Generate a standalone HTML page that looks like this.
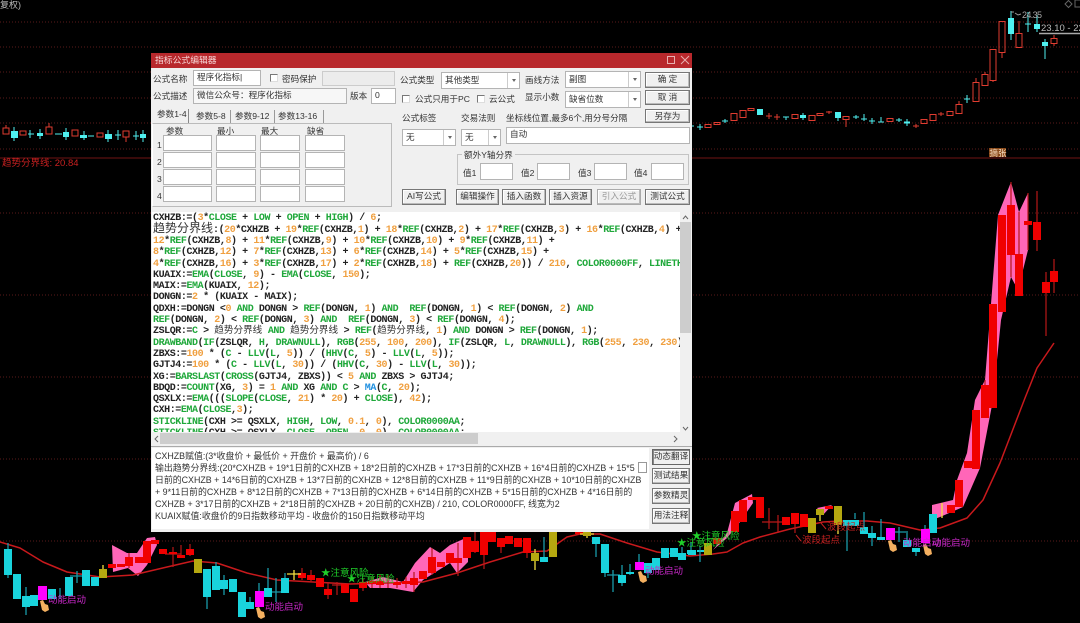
<!DOCTYPE html>
<html><head><meta charset="utf-8"><style>
html,body{margin:0;padding:0;background:#000;width:1080px;height:623px;overflow:hidden}
body{position:relative;font-family:"Liberation Sans","Noto Sans CJK SC",sans-serif}
svg.c{position:absolute;left:0;top:0;filter:blur(.35px)}
svg text{font-family:"Liberation Sans","Noto Sans CJK SC",sans-serif}
#d{position:absolute;left:151px;top:53px;width:541px;height:479px;background:#f0f0f0;overflow:hidden;filter:blur(.3px)}
#tb{position:absolute;left:0;top:0;width:541px;height:15px;background:#b8282c}
#d>div,#d>span{position:absolute}
.t{font-size:8.6px;line-height:12px;color:#333;white-space:nowrap}
.i{background:#fff;border:1px solid #b4b4b4;box-sizing:border-box;font-size:8.6px;line-height:13px;color:#333;padding-left:3px;white-space:nowrap}
.s{background:#fff;border:1px solid #b4b4b4;box-sizing:border-box;font-size:8.6px;line-height:14px;color:#333;padding-left:3px;white-space:nowrap}
.s:after{content:"";position:absolute;right:11px;top:0;bottom:0;width:1px;background:#ccc}
.s:before{content:"";position:absolute;right:3px;top:6px;border:2.5px solid transparent;border-top:3px solid #666;border-bottom:0}
.c2{width:8px;height:8px;border:1px solid #777;border-right-color:#ddd;border-bottom-color:#ddd;background:#fff;box-sizing:border-box}
.b{background:#f0f0f0;border:1px solid #777;box-sizing:border-box;font-size:8.6px;text-align:center;color:#333;line-height:13px;box-shadow:inset -1px -1px 0 #bbb,inset 1px 1px 0 #fff;white-space:nowrap}
#e{left:1px;top:159px;width:528px;height:220px;padding-top:1.4px;box-sizing:border-box;background:#fff;overflow:hidden;font-family:"Liberation Mono","Noto Sans CJK SC",monospace;font-size:10px;font-weight:bold;letter-spacing:-.43px;color:#222}
#e div{height:11.3px;line-height:11.3px;white-space:pre;padding-left:1px}
#e b{color:#1fa83a}#e i{font-style:normal;color:#f0a040}
#e u{text-decoration:none;font-family:"Noto Sans CJK SC",sans-serif;font-weight:normal;font-size:9.6px;letter-spacing:0;color:#333;line-height:1px}
#e s{text-decoration:none;font-family:"Noto Sans CJK SC",sans-serif;font-weight:normal;font-size:12px;letter-spacing:0;color:#333;line-height:1px}
#l{left:1px;top:395px;width:497px;height:81px;background:#fff;font-size:8.9px;line-height:12px;color:#333;padding:2.4px 0 0 3px;box-sizing:border-box;white-space:nowrap;overflow:hidden}
</style></head><body>
<svg class="c" width="1080" height="623" viewBox="0 0 1080 623">
<g stroke="#5a1a1a" stroke-width="1" stroke-dasharray="1 2" fill="none">
<path d="M0 22H1080M0 47H1080M0 72H1080M0 98H1080M0 123H1080M0 149H1080M0 213H1080M0 295H1080M0 377H1080M0 459H1080M0 541H1080"/>
</g>
<path d="M0 158H1080" stroke="#701515"/>
<text x="0" y="8" font-size="9" fill="#bbb">复权)</text>
<text x="2" y="166" font-size="9.5" fill="#c82020">趋势分界线: 20.84</text>
<!-- top-left candles -->
<g fill="none" stroke="#e03c30">
<path d="M3 128h6v6h-6zM20 131h6v4h-6zM46 127h6v7h-6zM72 130h6v6h-6zM97 133h6v4h-6zM123 131h6v6h-6zM6 125v3M49 123v4M126 137v5"/>
</g>
<path d="M11 131h7v7h-7zM37 133h6v3h-6zM63 132h6v5h-6zM80 135h7v3h-7zM105 134h7v5h-7zM140 134h6v4h-6z" fill="#4ff0f0"/>
<path d="M14 127v14M30 130v8M40 129v10M66 128v12M84 131v9M108 130v12M143 130v12M28 134h6M55 134h7M88 136h6M115 135h6M118 130v10M133 136h6M136 131v9" stroke="#4ff0f0" fill="none"/>
<!-- top panel right -->
<g fill="none" stroke="#e03c30" stroke-width="1">
<path d="M705 124.500h6v3h-6zM714 122.500h6v2h-6zM731 113.500h6v7h-6zM740 110.500h6v7h-6zM748 108.500h6v2h-6zM792 114.500h6v4h-6zM809 115.500h6v5h-6zM817 113.500h6v2h-6zM843 116.500h6v3h-6zM887 118.500h6v3h-6zM921 119.500h6v4h-6zM930 114.500h6v6h-6zM947 111.500h6v4h-6zM956 104.500h6v9h-6zM973 82.500h6v19h-6zM982 74.500h6v11h-6zM990 49.500h6v31h-6zM999 21.500h6v31h-6zM1016 33.500h6v14h-6zM1051 38.500h6v5h-6z"/>
<path d="M766 116h6M769 113v6M774 117h6M777 114v6M826 112h6M829 111v3M846 119v8M913 126h6M916 124v4M938 114h6M941 112v4M976 78v4M985 72v2M993 80v2M1002 52v6M1019 21v12M1054 35v3M1054 43v3M959 101v3"/>
</g>
<path d="M757 109h6v6h-6zM800 115h6v3h-6zM835 112h6v6h-6zM1008 18h6v16h-6zM1034 24h6v5h-6zM1042 42h6v4h-6zM904 121.500h6v2h-6z" fill="#4ff0f0"/>
<path d="M697 127h6M700 124v6M722 121h6M725 119v4M783 117h6M786 117v3M803 113v7M838 118v3M853 117h6M856 115v4M861 119h6M864 114v7M869 121h6M872 118v6M878 122h6M881 117v5M896 120h6M899 118v4M907 119v7M964 99h6M967 95v8M1011 11v29M1025 24h6M1028 12v20M1037 15v17M1045 39v20M691 126h3" stroke="#4ff0f0" fill="none"/>
<path d="M1011 12h3M1015 13l3 2 3-1" fill="none" stroke="#999"/>
<text x="1022" y="18" font-size="9" fill="#aaa" textLength="20">24.35</text>
<text x="1041" y="31" font-size="9.500" fill="#bbb">23.10 - 22</text>
<path d="M1039 33.500H1080" stroke="#aaa" stroke-width="1.500"/>
<path d="M1065 4l3.500-3.500 3.500 3.500-3.500 3.500z" fill="none" stroke="#666"/>
<rect x="1075" y="0" width="6" height="7" fill="none" stroke="#666"/>
<rect x="989" y="148" width="17" height="9" fill="#8a4a1a"/>
<text x="989.500" y="156" font-size="8.500" fill="#f5dcc0">摘张</text>
<!-- pink zones -->
<g fill="#ff66b8">
<path d="M932 505 953 500 957 480 967 453 975 400 985 380 998 215 1011 182 1019 212 1028 193 1028 250 1018 290 1011 277 1001 320 993 400 980 468 963 507 940 517 932 520Z"/>
<path d="M112 545 127 553 137 553 147 538 155 537 157 545 147 565 138 576 128 568 113 572Z"/>
<path d="M365 582 383 577 403 582 415 563 430 547 440 553 450 545 468 537 468 562 457 573 450 563 423 580 413 592 390 588 370 588Z"/>
<path d="M713 550 727 533 735 503 752 494 753 503 740 522 727 538Z"/>
<path d="M817 508 832 505 823 515Z"/>
</g>
<!-- trend line -->
<path d="M0 542 20 548 43 562 67 572 100 577 133 575 167 567 193 561 217 563 247 573 277 580 313 582 350 584 423 582 457 573 490 562 523 552 547 551 567 537 580 534 600 534 627 543 657 552 690 556 713 554 727 552 743 543 760 537 790 529 823 522 840 521 867 521 890 523 920 530 940 528 967 518 983 500 1000 463 1010 437 1025 398 1037 368 1054 343" fill="none" stroke="#c8191c" stroke-width="1.500" stroke-linejoin="round"/>
<!-- red wicks -->
<path d="M129 553v15M173 547v20M165 554h16M181 545v13M190 544v12M302 568v12M328 583v16M337 582v13M332 585h10M311 570v12M414 572v20M432 548v27M458 543v33M475 531v22M484 555v14M501 547v6M527 553v5M372 577v11M380 575v13M388 575v13M397 578v10M406 577v11M363 579v12M769 508v21M762 522h15M778 515v17M771 522h14M795 524v9M1011 182v95M1019 212v84M1028 193v57M1037 191v60M1046 272v64M1054 259v34M985 380v6" stroke="#b81818" stroke-width="1.200" fill="none"/>
<!-- red bodies -->
<path fill="#f00000" d="M108 564h8v4h-8zM117 564h8v3h-8zM125 557h8v9h-8zM135 557h8v6h-8zM143 541h8v22h-8zM151 540h8v4h-8zM159 549h8v5h-8zM169 552h8v2h-8zM177 555h8v3h-8zM186 549h8v6h-8zM298 573h8v5h-8zM307 575h8v5h-8zM316 578h8v9h-8zM324 589h8v6h-8zM341 584h8v9h-8zM350 589h8v13h-8zM359 582h8v6h-8zM368 581h8v3h-8zM376 581h8v4h-8zM393 582h8v3h-8zM402 581h8v3h-8zM410 578h8v7h-8zM419 571h8v8h-8zM428 557h8v16h-8zM437 562h8v5h-8zM446 553h8v10h-8zM454 558h8v5h-8zM463 537h8v21h-8zM471 541h8v11h-8zM480 531h8v24h-8zM488 531h8v11h-8zM497 538h8v9h-8zM505 536h8v8h-8zM514 538h8v9h-8zM523 538h8v15h-8zM575 531h8v3h-8zM713 538h8v6h-8zM731 511h8v21h-8zM739 500h8v22h-8zM748 497h8v3h-8zM756 497h8v21h-8zM782 517h8v8h-8zM791 513h8v11h-8zM800 514h8v13h-8zM825 506h8v3h-8zM947 505h8v8h-8zM955 480h8v27h-8zM964 461h8v7h-8zM972 410h8v59h-8zM981 385h8v33h-8zM989 304h8v96h-8zM989 400h8v8h-8zM998 215h8v97h-8zM1007 205h8v50h-8zM1015 254h8v42h-8zM1024 221h8v4h-8zM1033 222h8v18h-8zM1042 282h8v11h-8zM1050 271h8v11h-8z"/>
<!-- cyan wicks -->
<path d="M8 543v35M26 587v28M60 588v11M69 577v19M77 571v12M70 576h14M268 568v20M276 578v24M270 592h13M285 573v6M224 575v20M216 562v5M250 597v12M207 597v12M259 583v8M544 537v20M596 544v13M605 573v4M613 570v22M607 575h13M622 565v21M630 564v11M639 554v8M648 573v5M682 547v13M691 542v10M700 551v11M855 513v6M864 512v22M872 526v20M881 519v19M899 527v15M892 532h14M907 531v9M916 552v4M847 525v26M925 525v4M674 548v4" stroke="#1a9aa8" stroke-width="1.300" fill="none"/>
<!-- cyan bodies -->
<path fill="#19d3dc" d="M4 549h8v26h-8zM13 574h8v25h-8zM22 596h8v11h-8zM30 595h8v11h-8zM48 589h8v10h-8zM65 577h8v19h-8zM82 570h8v16h-8zM91 577h8v9h-8zM203 569h8v28h-8zM212 566h8v24h-8zM220 580h8v9h-8zM229 579h8v13h-8zM238 592h8v25h-8zM246 602h8v7h-8zM264 588h8v9h-8zM281 578h8v15h-8zM540 557h8v5h-8zM592 537h8v7h-8zM601 544h8v29h-8zM618 575h8v8h-8zM626 572h8v2h-8zM644 563h8v10h-8zM652 558h8v12h-8zM661 548h8v10h-8zM670 548h8v9h-8zM678 553h8v7h-8zM687 550h8v4h-8zM688 550h8v5h-8zM843 520h8v6h-8zM851 520h8v6h-8zM860 527h8v7h-8zM868 533h8v5h-8zM877 537h8v3h-8zM903 540h8v7h-8zM912 548h8v4h-8zM929 514h8v19h-8z"/>
<path d="M697 550h7v2h-7z" fill="#19d3dc"/>
<path d="M700 546v16" stroke="#1a9aa8"/>
<!-- olive/yellow -->
<path d="M103 565v5M535 549v21M820 515v6M838 525v9M942 503v15M294 570v10M287 574h14M587 530v8M580 534h14" stroke="#f4e040" stroke-width="1.300" fill="none"/>
<path fill="#b5a810" d="M99 569h8v9h-8zM194 559h8v14h-8zM531 553h8v8h-8zM549 531h8v26h-8zM704 543h8v12h-8zM808 518h8v15h-8zM816 509h8v6h-8zM834 506h8v19h-8zM583 532h8v4h-8z"/>
<!-- magenta -->
<path fill="#ff00ff" d="M38 586h9v14h-9zM255 591h9v16h-9zM635 562h9v8h-9zM886 528h9v12h-9zM921 529h9v14h-9z"/>
<!-- hands -->
<g fill="#f4b060">
<path d="M40 601l3-1 2 4 3 1 1 5-4 2-3-2z"/>
<path d="M256 608l3-1 2 4 3 1 1 5-4 2-3-2z"/>
<path d="M638 572l3-1 2 4 3 1 1 5-4 2-3-2z"/>
<path d="M888 541l3-1 2 4 3 1 1 5-4 2-3-2z"/>
<path d="M923 545l3-1 2 4 3 1 1 5-4 2-3-2z"/>
</g>
<!-- labels -->
<g font-size="9.500" fill="#c828c8">
<text x="48" y="603">动能启动</text><text x="265" y="610">动能启动</text><text x="645" y="574">动能启动</text><text x="903" y="546">动能启动</text><text x="932" y="546">动能启动</text>
</g>
<g font-size="9.500" fill="#1fd02a">
<text x="321" y="576">★注意风险</text><text x="347" y="582">★注意风险</text><text x="677" y="546">★注意风险</text><text x="692" y="539">★注意风险</text>
</g>
<g font-size="9.500" fill="#c02020">
<text x="802" y="543">波段起点</text><text x="827" y="530">波段起点</text>
</g>
<path d="M796 535l5 6M821 523l5 6" stroke="#c02020" fill="none"/>
</svg>
<div id="d">
<div id="tb"></div>
<span class="t" style="left:4px;top:1px;color:#f7d8d8;font-size:8.800px">指标公式编辑器</span>
<svg style="position:absolute;left:515px;top:2px" width="26" height="11"><rect x="1.500" y="1.500" width="7" height="7" fill="none" stroke="#e8b0b0"/><path d="M15 1l8 8M23 1l-8 8" stroke="#e8b0b0"/></svg>
<span class="t" style="left:2px;top:20px">公式名称</span>
<div class="i" style="left:42px;top:17px;width:68px;height:16px">程序化指标|</div>
<div class="c2" style="left:119px;top:21px"></div>
<span class="t" style="left:131px;top:20px">密码保护</span>
<div style="left:171px;top:18px;width:73px;height:15px;background:#ececec;border:1px solid #ccc;box-sizing:border-box"></div>
<span class="t" style="left:2px;top:37px">公式描述</span>
<div class="i" style="left:42px;top:35px;width:154px;height:16px;background:#f7f7f7">微信公众号：程序化指标</div>
<span class="t" style="left:199px;top:37px">版本</span>
<div class="i" style="left:220px;top:35px;width:25px;height:16px">0</div>
<!-- tabs -->
<span class="t" style="left:6px;top:55px">参数1-4</span>
<span class="t" style="left:45px;top:57px">参数5-8</span>
<span class="t" style="left:84px;top:57px">参数9-12</span>
<span class="t" style="left:127px;top:57px">参数13-16</span>
<div style="left:37px;top:56px;width:1px;height:14px;background:#888"></div>
<div style="left:79px;top:57px;width:1px;height:13px;background:#999"></div>
<div style="left:123px;top:57px;width:1px;height:13px;background:#999"></div>
<div style="left:172px;top:57px;width:1px;height:13px;background:#999"></div>
<div style="left:1px;top:70px;width:240px;height:84px;border:1px solid #bbb;border-left-color:#fff;box-sizing:border-box"></div>
<span class="t" style="left:15px;top:72px">参数</span>
<span class="t" style="left:66px;top:72px">最小</span>
<span class="t" style="left:110px;top:72px">最大</span>
<span class="t" style="left:156px;top:72px">缺省</span>
<span class="t" style="left:6px;top:86px">1</span><span class="t" style="left:6px;top:103px">2</span><span class="t" style="left:6px;top:120px">3</span><span class="t" style="left:6px;top:137px">4</span>
<div class="i" style="left:12px;top:82px;width:49px;height:16px"></div><div class="i" style="left:65px;top:82px;width:40px;height:16px"></div><div class="i" style="left:109px;top:82px;width:40px;height:16px"></div><div class="i" style="left:154px;top:82px;width:40px;height:16px"></div>
<div class="i" style="left:12px;top:99px;width:49px;height:16px"></div><div class="i" style="left:65px;top:99px;width:40px;height:16px"></div><div class="i" style="left:109px;top:99px;width:40px;height:16px"></div><div class="i" style="left:154px;top:99px;width:40px;height:16px"></div>
<div class="i" style="left:12px;top:116px;width:49px;height:16px"></div><div class="i" style="left:65px;top:116px;width:40px;height:16px"></div><div class="i" style="left:109px;top:116px;width:40px;height:16px"></div><div class="i" style="left:154px;top:116px;width:40px;height:16px"></div>
<div class="i" style="left:12px;top:133px;width:49px;height:16px"></div><div class="i" style="left:65px;top:133px;width:40px;height:16px"></div><div class="i" style="left:109px;top:133px;width:40px;height:16px"></div><div class="i" style="left:154px;top:133px;width:40px;height:16px"></div>
<!-- right form -->
<span class="t" style="left:249px;top:21px">公式类型</span>
<div class="s" style="left:290px;top:19px;width:79px;height:17px">其他类型</div>
<span class="t" style="left:374px;top:21px">画线方法</span>
<div class="s" style="left:414px;top:18px;width:76px;height:17px">副图</div>
<div class="b" style="left:494px;top:19px;width:45px;height:16px">确 定</div>
<div class="c2" style="left:251px;top:42px"></div>
<span class="t" style="left:264px;top:40px">公式只用于PC</span>
<div class="c2" style="left:326px;top:42px"></div>
<span class="t" style="left:338px;top:40px">云公式</span>
<span class="t" style="left:374px;top:38px">显示小数</span>
<div class="s" style="left:414px;top:38px;width:76px;height:17px">缺省位数</div>
<div class="b" style="left:494px;top:37px;width:45px;height:15px">取 消</div>
<div class="b" style="left:494px;top:56px;width:45px;height:14px;line-height:12px">另存为</div>
<span class="t" style="left:251px;top:59px">公式标签</span>
<span class="t" style="left:310px;top:59px">交易法则</span>
<span class="t" style="left:355px;top:59px">坐标线位置,最多6个,用分号分隔</span>
<div class="s" style="left:251px;top:76px;width:54px;height:17px">无</div>
<div class="s" style="left:310px;top:76px;width:40px;height:17px">无</div>
<div class="i" style="left:355px;top:74px;width:184px;height:17px">自动</div>
<div style="left:306px;top:101px;width:232px;height:31px;border:1px solid #c4c4c4;box-sizing:border-box"></div>
<span class="t" style="left:311px;top:96px;background:#f0f0f0;padding:0 2px">额外Y轴分界</span>
<span class="t" style="left:312px;top:114px">值1</span><div class="i" style="left:329px;top:110px;width:33px;height:17px"></div>
<span class="t" style="left:370px;top:114px">值2</span><div class="i" style="left:386px;top:110px;width:33px;height:17px"></div>
<span class="t" style="left:427px;top:114px">值3</span><div class="i" style="left:443px;top:110px;width:33px;height:17px"></div>
<span class="t" style="left:483px;top:114px">值4</span><div class="i" style="left:500px;top:110px;width:33px;height:17px"></div>
<div class="b" style="left:251px;top:136px;width:44px;height:16px">AI写公式</div>
<div class="b" style="left:305px;top:136px;width:43px;height:16px">编辑操作</div>
<div class="b" style="left:351px;top:136px;width:44px;height:16px">插入函数</div>
<div class="b" style="left:398px;top:136px;width:43px;height:16px">插入资源</div>
<div class="b" style="left:446px;top:136px;width:44px;height:16px;color:#999;border-color:#aaa">引入公式</div>
<div class="b" style="left:494px;top:136px;width:45px;height:16px">测试公式</div>
<!-- editor -->
<div id="e">
<div>CXHZB:=(<i>3</i>*<b>CLOSE</b> + <b>LOW</b> + <b>OPEN</b> + <b>HIGH</b>) / <i>6</i>;</div>
<div><s>趋势分界线</s>:(<i>20</i>*CXHZB + <i>19</i>*<b>REF</b>(CXHZB,<i>1</i>) + <i>18</i>*<b>REF</b>(CXHZB,<i>2</i>) + <i>17</i>*<b>REF</b>(CXHZB,<i>3</i>) + <i>16</i>*<b>REF</b>(CXHZB,<i>4</i>) +</div>
<div><i>12</i>*<b>REF</b>(CXHZB,<i>8</i>) + <i>11</i>*<b>REF</b>(CXHZB,<i>9</i>) + <i>10</i>*<b>REF</b>(CXHZB,<i>10</i>) + <i>9</i>*<b>REF</b>(CXHZB,<i>11</i>) +</div>
<div><i>8</i>*<b>REF</b>(CXHZB,<i>12</i>) + <i>7</i>*<b>REF</b>(CXHZB,<i>13</i>) + <i>6</i>*<b>REF</b>(CXHZB,<i>14</i>) + <i>5</i>*<b>REF</b>(CXHZB,<i>15</i>) +</div>
<div><i>4</i>*<b>REF</b>(CXHZB,<i>16</i>) + <i>3</i>*<b>REF</b>(CXHZB,<i>17</i>) + <i>2</i>*<b>REF</b>(CXHZB,<i>18</i>) + <b>REF</b>(CXHZB,<i>20</i>)) / <i>210</i>, <b>COLOR0000FF</b>, <b>LINETHICK2</b>;</div>
<div>KUAIX:=<b>EMA</b>(<b>CLOSE</b>, <i>9</i>) - <b>EMA</b>(<b>CLOSE</b>, <i>150</i>);</div>
<div>MAIX:=<b>EMA</b>(KUAIX, <i>12</i>);</div>
<div>DONGN:=<i>2</i> * (KUAIX - MAIX);</div>
<div>QDXH:=DONGN &lt;<i>0</i> <b>AND</b> DONGN &gt; <b>REF</b>(DONGN, <i>1</i>) <b>AND</b>  <b>REF</b>(DONGN, <i>1</i>) &lt; <b>REF</b>(DONGN, <i>2</i>) <b>AND</b></div>
<div><b>REF</b>(DONGN, <i>2</i>) &lt; <b>REF</b>(DONGN, <i>3</i>) <b>AND</b>  <b>REF</b>(DONGN, <i>3</i>) &lt; <b>REF</b>(DONGN, <i>4</i>);</div>
<div>ZSLQR:=<b>C</b> &gt; <u>趋势分界线</u> <b>AND</b> <u>趋势分界线</u> &gt; <b>REF</b>(<u>趋势分界线</u>, <i>1</i>) <b>AND</b> DONGN &gt; <b>REF</b>(DONGN, <i>1</i>);</div>
<div><b>DRAWBAND</b>(<b>IF</b>(ZSLQR, <b>H</b>, <b>DRAWNULL</b>), <b>RGB</b>(<i>255</i>, <i>100</i>, <i>200</i>), <b>IF</b>(ZSLQR, <b>L</b>, <b>DRAWNULL</b>), <b>RGB</b>(<i>255</i>, <i>230</i>, <i>230</i>));</div>
<div>ZBXS:=<i>100</i> * (<b>C</b> - <b>LLV</b>(<b>L</b>, <i>5</i>)) / (<b>HHV</b>(<b>C</b>, <i>5</i>) - <b>LLV</b>(<b>L</b>, <i>5</i>));</div>
<div>GJTJ4:=<i>100</i> * (<b>C</b> - <b>LLV</b>(<b>L</b>, <i>30</i>)) / (<b>HHV</b>(<b>C</b>, <i>30</i>) - <b>LLV</b>(<b>L</b>, <i>30</i>));</div>
<div>XG:=<b>BARSLAST</b>(<b>CROSS</b>(GJTJ4, ZBXS)) &lt; <i>5</i> <b>AND</b> ZBXS &gt; GJTJ4;</div>
<div>BDQD:=<b>COUNT</b>(XG, <i>3</i>) = <i>1</i> <b>AND</b> XG <b>AND</b> <b>C</b> &gt; <span style="color:#2090e0">MA</span>(<b>C</b>, <i>20</i>);</div>
<div>QSXLX:=<b>EMA</b>(((<b>SLOPE</b>(<b>CLOSE</b>, <i>21</i>) * <i>20</i>) + <b>CLOSE</b>), <i>42</i>);</div>
<div>CXH:=<b>EMA</b>(<b>CLOSE</b>,<i>3</i>);</div>
<div><b>STICKLINE</b>(CXH &gt;= QSXLX, <b>HIGH</b>, <b>LOW</b>, <i>0.1</i>, <i>0</i>), <b>COLOR0000AA</b>;</div>
<div><b>STICKLINE</b>(CXH &gt;= QSXLX, <b>CLOSE</b>, <b>OPEN</b>, <i>0</i>, <i>0</i>), <b>COLOR0000AA</b>;</div>
</div>
<!-- scrollbars -->
<div style="left:529px;top:159px;width:11px;height:220px;background:#f0f0f0"></div>
<div style="left:529px;top:169px;width:11px;height:111px;background:#cdcdcd"></div>
<svg style="position:absolute;left:529px;top:160px" width="11" height="220"><path d="M3 6l2.500-3 2.500 3M3 214l2.500 3 2.500-3" fill="none" stroke="#666"/></svg>
<div style="left:1px;top:379px;width:528px;height:14px;background:#f0f0f0"></div>
<div style="left:9px;top:380px;width:318px;height:11px;background:#cdcdcd"></div>
<svg style="position:absolute;left:1px;top:379px" width="528" height="14"><path d="M6 4l-3 3 3 3M522 4l3 3-3 3" fill="none" stroke="#666"/></svg>
<div style="left:0;top:393px;width:541px;height:1px;background:#aaa"></div>
<!-- lower -->
<div id="l">CXHZB赋值:(3*收盘价 + 最低价 + 开盘价 + 最高价) / 6<br>输出趋势分界线:(20*CXHZB + 19*1日前的CXHZB + 18*2日前的CXHZB + 17*3日前的CXHZB + 16*4日前的CXHZB + 15*5<br>日前的CXHZB + 14*6日前的CXHZB + 13*7日前的CXHZB + 12*8日前的CXHZB + 11*9日前的CXHZB + 10*10日前的CXHZB<br>+ 9*11日前的CXHZB + 8*12日前的CXHZB + 7*13日前的CXHZB + 6*14日前的CXHZB + 5*15日前的CXHZB + 4*16日前的<br>CXHZB + 3*17日前的CXHZB + 2*18日前的CXHZB + 20日前的CXHZB) / 210, COLOR0000FF, 线宽为2<br>KUAIX赋值:收盘价的9日指数移动平均 - 收盘价的150日指数移动平均</div>
<div style="left:487px;top:409px;width:7px;height:9px;border:1px solid #999;background:#fff"></div>
<div class="b" style="left:501px;top:396px;width:38px;height:16px;box-shadow:inset 1px 1px 0 #888;border-color:#666">动态翻译</div>
<div class="b" style="left:501px;top:415px;width:38px;height:16px">测试结果</div>
<div class="b" style="left:501px;top:435px;width:38px;height:16px">参数精灵</div>
<div class="b" style="left:501px;top:455px;width:38px;height:16px">用法注释</div>
</div>
</body></html>
